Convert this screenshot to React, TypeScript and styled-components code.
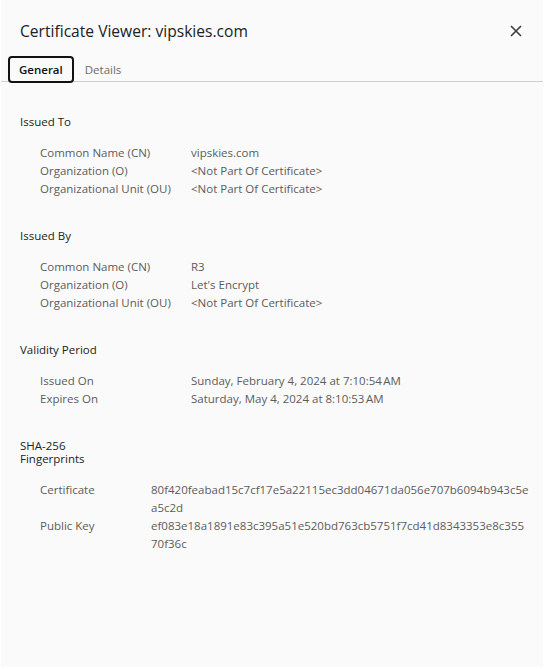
import styled, { createGlobalStyle } from "styled-components";

const GlobalStyle = createGlobalStyle`
  html, body {
    margin: 0;
    padding: 0;
    background: #ffffff;
  }
  body {
    font-family: "Open Sans", "Noto Sans", sans-serif;
  }
`;

const Dialog = styled.div`
  width: 542px;
  height: 667px;
  background: #fafafa;
  box-sizing: border-box;
  margin-left: 1px;
`;

const Header = styled.div`
  display: flex;
  align-items: center;
  justify-content: space-between;
  padding: 20px 19px 0 19px;
  height: 22px;
`;

const Title = styled.h1`
  margin: 0;
  font-size: 15.6px;
  font-weight: 400;
  color: #202124;
`;

const CloseButton = styled.button`
  border: none;
  background: transparent;
  padding: 0;
  width: 16px;
  height: 16px;
  display: flex;
  align-items: center;
  justify-content: center;
  color: #3c3c3c;
`;

const TabBar = styled.div`
  display: flex;
  align-items: center;
  gap: 0;
  margin-top: 14px;
  padding-left: 7px;
  border-bottom: 1px solid #cfcfcf;
  height: 25px;
`;

const Tab = styled.button<{ $active?: boolean }>`
  font-family: inherit;
  font-size: 11.5px;
  background: transparent;
  padding: 0 9px;
  height: 27px;
  margin-top: 2px;
  border-radius: 4px;
  border: 2px solid ${(p) => (p.$active ? "#111" : "transparent")};
  font-weight: ${(p) => (p.$active ? 600 : 400)};
  color: ${(p) => (p.$active ? "#111" : "#6a6a6a")};
`;

const Content = styled.div`
  padding: 33px 4px 0 19px;
`;

const Section = styled.section`
  margin-bottom: 31px;
`;

const SectionTitle = styled.div<{ $narrow?: boolean }>`
  font-size: 11.5px;
  color: #222;
  line-height: 13px;
  max-width: ${(p) => (p.$narrow ? "70px" : "none")};
  margin-bottom: 16px;
`;

const Table = styled.div<{ $labelWidth: number }>`
  display: grid;
  grid-template-columns: ${(p) => p.$labelWidth}px 1fr;
  padding-left: 20px;
  font-size: 11.5px;
  line-height: 18px;
`;

const Label = styled.div`
  color: #5c5c5c;
`;

const Value = styled.div`
  color: #5c5c5c;
  word-break: break-all;
  max-width: 378px;
`;

type Row = [string, string];

const sections: { title: string; labelWidth: number; narrow?: boolean; rows: Row[] }[] = [
  {
    title: "Issued To",
    labelWidth: 151,
    rows: [
      ["Common Name (CN)", "vipskies.com"],
      ["Organization (O)", "<Not Part Of Certificate>"],
      ["Organizational Unit (OU)", "<Not Part Of Certificate>"],
    ],
  },
  {
    title: "Issued By",
    labelWidth: 151,
    rows: [
      ["Common Name (CN)", "R3"],
      ["Organization (O)", "Let's Encrypt"],
      ["Organizational Unit (OU)", "<Not Part Of Certificate>"],
    ],
  },
  {
    title: "Validity Period",
    labelWidth: 151,
    rows: [
      ["Issued On", "Sunday, February 4, 2024 at 7:10:54\u202fAM"],
      ["Expires On", "Saturday, May 4, 2024 at 8:10:53\u202fAM"],
    ],
  },
  {
    title: "SHA-256 Fingerprints",
    labelWidth: 111,
    narrow: true,
    rows: [
      ["Certificate", "80f420feabad15c7cf17e5a22115ec3dd04671da056e707b6094b943c5ea5c2d"],
      ["Public Key", "ef083e18a1891e83c395a51e520bd763cb5751f7cd41d8343353e8c35570f36c"],
    ],
  },
];

export default function App() {
  return (
    <>
      <GlobalStyle />
      <Dialog>
        <Header>
          <Title>Certificate Viewer: vipskies.com</Title>
          <CloseButton aria-label="Close">
            <svg width="12" height="12" viewBox="0 0 12 12">
              <path d="M1 1 L11 11 M11 1 L1 11" stroke="currentColor" strokeWidth="1.6" />
            </svg>
          </CloseButton>
        </Header>
        <TabBar>
          <Tab $active>General</Tab>
          <Tab>Details</Tab>
        </TabBar>
        <Content>
          {sections.map((s) => (
            <Section key={s.title}>
              <SectionTitle $narrow={s.narrow}>{s.title}</SectionTitle>
              <Table $labelWidth={s.labelWidth}>
                {s.rows.map(([k, v]) => (
                  <>
                    <Label key={k}>{k}</Label>
                    <Value key={k + "v"}>{v}</Value>
                  </>
                ))}
              </Table>
            </Section>
          ))}
        </Content>
      </Dialog>
    </>
  );
}
